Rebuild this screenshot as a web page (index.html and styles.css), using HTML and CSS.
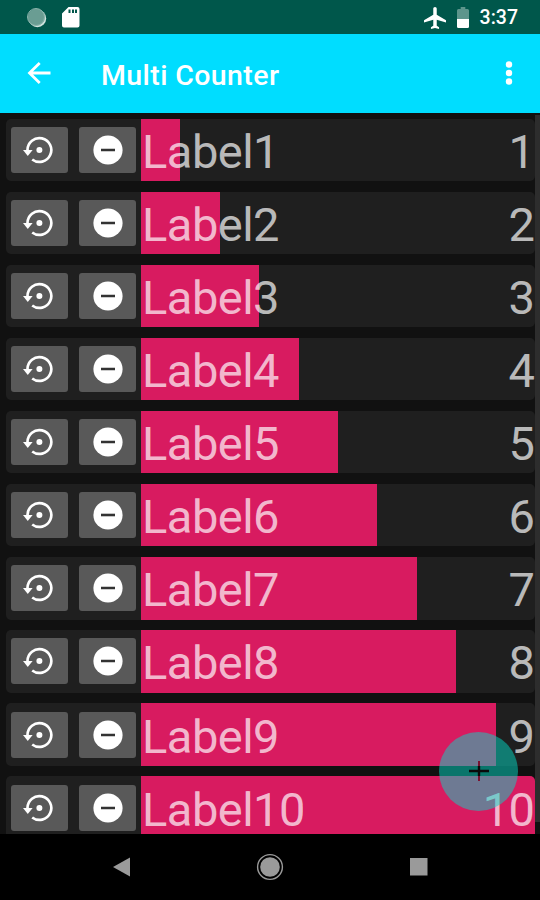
FILE: index.html
```html
<!DOCTYPE html>
<html lang="en">
<head>
  <meta charset="UTF-8">
  <meta name="viewport" content="width=device-width, initial-scale=1.0">
  <title>Multi Counter</title>
  <link rel="stylesheet" href="styles.css">
</head>
<body>

<div class="status-bar">
  <svg class="sync-icon" width="20" height="20" viewBox="0 0 20 20">
    <circle cx="10.4" cy="10.4" r="8.8" fill="#cfe3de"/>
    <circle cx="9.3" cy="9.3" r="8.5" fill="#6a9d93"/>
    <circle cx="9" cy="9" r="8.5" fill="none" stroke="#8db5ad" stroke-width="1"/>
  </svg>
  <svg class="sd-icon" width="18" height="21" viewBox="0 0 18 21">
    <path fill="#fff" fill-rule="evenodd" d="M6.5 0H15.5Q17.5 0 17.5 2V18.5Q17.5 20.5 15.5 20.5H2Q0 20.5 0 18.5V6.5ZM6.5 2.5V6H8.5V2.5ZM10 2.5V6H12V2.5ZM13 2.5V6H15V2.5Z"/>
  </svg>
  <div class="status-right">
    <svg class="plane-icon" width="22" height="22" viewBox="2 2 19 20" preserveAspectRatio="none">
      <path fill="#fff" d="M21 16v-2l-8-5V3.500C13 2.670 12.330 2 11.500 2S10 2.670 10 3.500V9l-8 5v2l8-2.500V19l-2 1.500V22l3.500-1 3.500 1v-1.500L13 19v-5.500l8 2.500z"/>
    </svg>
    <svg class="battery-icon" width="12" height="21" viewBox="0 0 13 21" preserveAspectRatio="none">
      <path fill="#5d958c" d="M4 0H9V2H11.500Q13 2 13 3.500V12H0V3.500Q0 2 1.500 2H4Z"/>
      <path fill="#fff" d="M0 12H13V19.500Q13 21 11.500 21H1.500Q0 21 0 19.500Z"/>
    </svg>
    <span class="clock">3:37</span>
  </div>
</div>

<div class="app-bar">
  <svg class="back-icon" width="24" height="24" viewBox="0 0 24 24">
    <path fill="none" stroke="#fff" stroke-width="2.800" d="M23.500 12H2.500M12.700 2L2.500 12L12.700 22"/>
  </svg>
  <h1>Multi Counter</h1>
  <svg class="menu-icon" width="8" height="26" viewBox="0 0 8 26">
    <g fill="#fff"><circle cx="4" cy="4.500" r="3.200"/><circle cx="4" cy="13" r="3.200"/><circle cx="4" cy="21.500" r="3.200"/></g>
  </svg>
</div>

<div class="content">
  <div class="counter-list" id="counterList">
    <!-- Counters will be populated here -->
  </div>
  <div class="scrollbar"></div>
  <button class="fab" onclick="addCounter()">
    <svg width="20" height="20" viewBox="0 0 20 20">
      <path stroke="#7a1230" stroke-width="2" d="M10 0V20"/>
      <path stroke="#0a0a0a" stroke-width="2.400" d="M10 5V15M0 10H20"/>
    </svg>
  </button>
</div>

<div class="nav-bar">
  <svg width="17" height="20" viewBox="0 0 17 20"><path fill="#9a9a9a" d="M0 10L17 0.500V19.500Z"/></svg>
  <svg width="28" height="28" viewBox="0 0 28 28">
    <circle cx="14" cy="14" r="12.400" fill="none" stroke="#9a9a9a" stroke-width="1.400"/>
    <circle cx="14" cy="14" r="9.800" fill="#9a9a9a"/>
  </svg>
  <svg width="18" height="18" viewBox="0 0 18 18"><rect width="17.500" height="17.500" fill="#9a9a9a"/></svg>
</div>

<script>
  var counters = [];
  for (var i = 1; i <= 10; i++) {
    counters.push({ label: "Label" + i, value: i });
  }

  // Draw every counter, each bar is relative to the highest value
  function loadCounters() {
    var list = document.getElementById("counterList");
    var max = Math.max.apply(null, counters.map(function(c) { return c.value; })) || 1;
    list.innerHTML = "";

    counters.forEach(function(counter, index) {
      var row = document.createElement("div");
      row.className = "counter";
      row.innerHTML = `
        <button class="button" onclick="resetCounter(${index})">
          <svg class="reset-icon" width="30" height="28" viewBox="0 0 30 28">
            <path fill="none" stroke="#fff" stroke-width="2.700" d="M4.500 14A11.900 11.900 0 1 1 9.200 23.500"/>
            <path fill="#fff" d="M0 14H9.600L4.800 20Z"/>
            <circle cx="16.400" cy="14" r="3" fill="#fff"/>
          </svg>
        </button>
        <button class="button" onclick="decreaseCounter(${index})">
          <svg width="30" height="30" viewBox="0 0 30 30">
            <circle cx="15" cy="15" r="14.600" fill="#fff"/>
            <path stroke="#333" stroke-width="2.600" d="M8 15H22"/>
          </svg>
        </button>
        <div class="meter">
          <div class="bar" style="width: ${counter.value / max * 100}%"></div>
          <span>${counter.label}</span>
          <span>${counter.value}</span>
        </div>
      `;
      list.appendChild(row);
    });
  }

  function resetCounter(index) {
    counters[index].value = 0;
    loadCounters();
  }

  function decreaseCounter(index) {
    counters[index].value = Math.max(0, counters[index].value - 1);
    loadCounters();
  }

  function addCounter() {
    counters.push({ label: "Label" + (counters.length + 1), value: 0 });
    loadCounters();
  }

  window.onload = loadCounters;
</script>

</body>
</html>
```
FILE: styles.css
```css
body {
  margin: 0;
  height: 900px;
  display: flex;
  flex-direction: column;
  overflow: hidden;
  background-color: #000;
  font-family: Roboto, sans-serif;
}

svg {
  display: block;
  flex-shrink: 0;
}

.status-bar {
  height: 34px;
  box-sizing: border-box;
  flex-shrink: 0;
  display: flex;
  align-items: center;
  padding: 1px 22px 0 27px;
  background-color: #00574b;
}

.sd-icon {
  margin-left: 15px;
}

.status-right {
  display: flex;
  align-items: center;
  margin-left: auto;
}

.battery-icon {
  margin-left: 11px;
}

.clock {
  margin-left: 11px;
  font-size: 19.5px;
  font-weight: 500;
  line-height: 34px;
  color: #fff;
}

.app-bar {
  height: 79px;
  box-sizing: border-box;
  flex-shrink: 0;
  display: flex;
  align-items: center;
  padding: 0 27px 1px 27px;
  background-color: #00ddff;
}

.app-bar h1 {
  margin: 4px 0 0 50px;
  font-size: 28.5px;
  font-weight: 500;
  letter-spacing: 0.4px;
  color: #fff;
}

.menu-icon {
  margin-left: auto;
}

.content {
  position: relative;
  height: 720.5px;
  flex-shrink: 0;
  display: flex;
  overflow: hidden;
  background-color: #111;
}

.counter-list {
  flex: 1;
  padding: 5.5px 0 0 6px;
}

.counter {
  display: flex;
  align-items: center;
  gap: 11px;
  height: 62.5px;
  margin-bottom: 10.6px;
  padding-left: 5px;
  border-radius: 5px;
  background-color: #1f1f1f;
  overflow: hidden;
}

.button {
  display: flex;
  align-items: center;
  justify-content: center;
  width: 57px;
  height: 46px;
  padding: 0;
  border: none;
  border-radius: 3px;
  background-color: #595959;
  cursor: pointer;
}

.reset-icon {
  margin-right: 3px;
}

.meter {
  position: relative;
  flex: 1;
  display: flex;
  align-items: center;
  justify-content: space-between;
  height: 100%;
  box-sizing: border-box;
  margin-left: -6px;
  padding: 4px 0.5px 0 1px;
  font-size: 47px;
  line-height: 46px;
  letter-spacing: -0.5px;
  color: rgba(255, 255, 255, 0.7);
}

.meter span {
  position: relative;
}

/* sits behind the label and the value */
.bar {
  position: absolute;
  top: 0;
  left: 0;
  height: 100%;
  background-color: #d81b60;
}

.scrollbar {
  width: 5px;
  height: 707px;
  margin-top: 2px;
  background-color: #2d2d2d;
}

.fab {
  position: absolute;
  right: 22px;
  bottom: 23px;
  display: flex;
  align-items: center;
  justify-content: center;
  width: 79px;
  height: 79px;
  padding: 0;
  border: none;
  border-radius: 50%;
  background-color: rgba(3, 218, 197, 0.5);
  cursor: pointer;
}

.nav-bar {
  flex: 1;
  display: flex;
  align-items: center;
  justify-content: space-between;
  padding: 0 112px 0 113px;
}
```
